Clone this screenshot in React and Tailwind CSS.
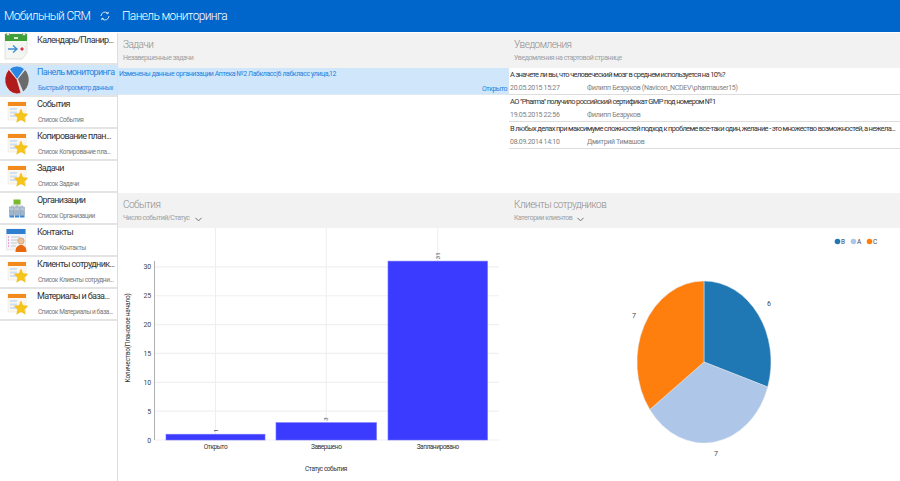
import React from 'react';
import {ChevronDown} from 'lucide-react';

function CalendarIcon() {
  return (
    <svg width="26" height="29" viewBox="0 0 26 29" className="-mt-1">
      <path d="M1 2h22v19l-5 6H1z" fill="#f4f6f2" stroke="#cfd4cc" strokeWidth="0.6" />
      <rect x="1" y="2" width="22" height="7" fill="#3fa03a" />
      <circle cx="4" cy="2" r="1.6" fill="#e8efe4" stroke="#6a8f60" strokeWidth="0.5" />
      <circle cx="20" cy="2" r="1.6" fill="#e8efe4" stroke="#6a8f60" strokeWidth="0.5" />
      <rect x="10" y="5" width="4" height="2" fill="#d9ecd5" />
      <path d="M4 17h8M9 13.500l4 3.500-4 3.500" fill="none" stroke="#3f8fd6" strokeWidth="1.400" />
      <rect x="15" y="14" width="6" height="6" fill="#fff" stroke="#d8d8d8" strokeWidth="0.4" />
      <circle cx="18" cy="17" r="1.700" fill="#d8344a" />
    </svg>
  );
}

function PieIcon() {
  return (
    <svg width="24" height="28" viewBox="0 0 24 28">
      <path d="M12 13.500L4.500 3A12 13.500 0 0 1 19.500 3z" fill="#2a86e0" stroke="#fff" strokeWidth="0.6" />
      <path d="M12 13.500L3.800 3.500A12 14 0 0 0 16 27z" fill="#b01c1c" stroke="#fff" strokeWidth="0.6" />
      <path d="M12.500 13L20.200 3.500A12 14 0 0 1 18 26z" fill="#6b6b6b" stroke="#fff" strokeWidth="0.6" />
    </svg>
  );
}

function StarTableIcon() {
  return (
    <svg width="21" height="23" viewBox="0 0 21 23">
      <rect x="1" y="1" width="18" height="18" fill="#fbf7ee" stroke="#e6e1d6" strokeWidth="0.5" />
      <rect x="1" y="1" width="18" height="4" fill="#f28a1e" />
      <rect x="3" y="7" width="7" height="2" fill="#cfe0f2" />
      <rect x="3" y="10.500" width="7" height="2" fill="#cfe0f2" />
      <rect x="3" y="14" width="7" height="2" fill="#cfe0f2" />
      <path d="M14 8l2 4.500 4.800.6-3.500 3.300 1 4.800L14 18.700 9.700 21.200l1-4.800L7.200 13.100l4.800-.6z" fill="#f5c518" stroke="#e8ae10" strokeWidth="0.4" />
    </svg>
  );
}

function OrgIcon() {
  return (
    <svg width="16" height="19" viewBox="0 0 16 19">
      <rect x="4.500" y="0.500" width="7" height="5" fill="#79b92e" />
      <path d="M8 5.500v2M2.500 8V7h11v1M8 7v1" fill="none" stroke="#8a9aa8" strokeWidth="0.6" />
      {[0.5, 5.8, 11].map((x) => (
        <g key={x}>
          <rect x={x} y="8" width="4.500" height="4" fill="#b6c6d6" stroke="#71879c" strokeWidth="0.4" />
          <rect x={x} y="12.500" width="4.500" height="4" fill="#9db6ce" stroke="#71879c" strokeWidth="0.4" />
          <rect x={x} y="16.500" width="4.500" height="2" fill="#3f86cf" />
        </g>
      ))}
    </svg>
  );
}

function ContactIcon() {
  return (
    <svg width="22" height="25" viewBox="0 0 22 25">
      <rect x="0.500" y="1" width="19" height="21" fill="#f4f5f7" stroke="#d6d8dc" strokeWidth="0.5" />
      <rect x="0.500" y="1" width="19" height="5" fill="#2f7fd0" />
      <path d="M2 9h1M2 12h1M2 15h1M2 18h1" stroke="#d64fc8" strokeWidth="1" />
      <path d="M5 9h9M5 12h7M5 15h6M5 18h5" stroke="#b9bec6" strokeWidth="0.8" />
      <circle cx="15" cy="13" r="3.200" fill="#eec39a" stroke="#a87f58" strokeWidth="0.4" />
      <path d="M9.500 24c0-5 2.500-7 5.500-7s5.500 2 5.500 7z" fill="#e8690f" />
    </svg>
  );
}

const menu = [
  {title: 'Календарь/Планир...', sub: '', icon: <CalendarIcon />},
  {title: 'Панель мониторинга', sub: 'Быстрый просмотр данных', icon: <PieIcon />, active: true},
  {title: 'События', sub: 'Список События', icon: <StarTableIcon />},
  {title: 'Копирование план...', sub: 'Список Копирование пла...', icon: <StarTableIcon />},
  {title: 'Задачи', sub: 'Список Задачи', icon: <StarTableIcon />},
  {title: 'Организации', sub: 'Список Организации', icon: <OrgIcon />},
  {title: 'Контакты', sub: 'Список Контакты', icon: <ContactIcon />},
  {title: 'Клиенты сотрудник...', sub: 'Список Клиенты сотрудни...', icon: <StarTableIcon />},
  {title: 'Материалы и база...', sub: 'Список Материалы и база...', icon: <StarTableIcon />},
];

const notices = [
  {
    text: 'А значете ли вы, что человеческий мозг в среднем используется на 10%?',
    date: '20.05.2015 15:27',
    author: 'Филипп Безруков (Navicon_NCDEV\\pharmauser15)',
  },
  {
    text: 'АО "Pharma" получило российский сертификат GMP под номером №1',
    date: '19.05.2015 22:56',
    author: 'Филипп Безруков',
  },
  {
    text: 'В любых делах при максимуме сложностей подход к проблеме все-таки один, желание - это множество возможностей, а нежела...',
    date: '08.09.2014 14:10',
    author: 'Дмитрий Тимашов',
  },
];

function PanelHead({title, sub, chevron}) {
  return (
    <div className="h-[35px] bg-[#f2f2f2] px-[5px] pt-[5px]">
      <div className="text-[10px] leading-[14px] font-light text-[#8c8c8c] tracking-[-0.5px]">{title}</div>
      <div className="flex items-center gap-[3px] text-[7px] leading-[13px] text-[#a0a0a0] tracking-[-0.45px]">
        {sub}
        {chevron && <ChevronDown size={11} strokeWidth={2} className="text-[#666] mt-[2px]" />}
      </div>
    </div>
  );
}

function BarChart() {
  const bars = [
    {x: 166, w: 99, v: 1, label: 'Открыто'},
    {x: 276, w: 100.500, v: 3, label: 'Завершено'},
    {x: 388, w: 99.500, v: 31, label: 'Запланировано'},
  ];
  const y = (v) => 440 - v * 5.77;
  return (
    <svg width="391" height="253" viewBox="118 228 391 253" className="block" fontFamily="Roboto, sans-serif">
      {[0, 5, 10, 15, 20, 25, 30].map((v) => (
        <g key={v}>
          <line x1="154" x2="499" y1={y(v)} y2={y(v)} stroke="#f0f0f0" strokeWidth="1.200" />
          <text x="151" y={y(v) + 2.500} textAnchor="end" fontSize="7" fill="#444" letterSpacing="-0.2">{v}</text>
        </g>
      ))}
      {bars.map((b) => (
        <line key={b.x} x1={b.x + b.w / 2} x2={b.x + b.w / 2} y1="228" y2="440" stroke="#eeeeee" />
      ))}
      <line x1="154.500" x2="154.500" y1="261" y2="440" stroke="#b0b0b0" />
      {bars.map((b) => (
        <g key={b.label}>
          <rect x={b.x} y={y(b.v)} width={b.w} height={440 - y(b.v)} fill="#3b3bff" stroke="#6f6fff" strokeWidth="0.6" />
          <text transform={`translate(${b.x + b.w / 2 + 2} ${y(b.v) - 2}) rotate(-90)`} fontSize="6" fill="#555">{b.v}</text>
          <text x={b.x + b.w / 2} y="449" textAnchor="middle" fontSize="6.500" fill="#333" letterSpacing="-0.45">{b.label}</text>
        </g>
      ))}
      <text x="326" y="471" textAnchor="middle" fontSize="6.500" fill="#333" letterSpacing="-0.45">Статус события</text>
      <text transform="translate(129.500 338) rotate(-90)" textAnchor="middle" fontSize="6.500" fill="#333" letterSpacing="-0.2">Количество(Плановое начало)</text>
    </svg>
  );
}

function PieChart() {
  return (
    <svg width="391" height="253" viewBox="509 228 391 253" className="block" fontFamily="Roboto, sans-serif">
      <circle cx="837.500" cy="241.500" r="2.800" fill="#1f77b4" />
      <text x="841" y="244" fontSize="6.500" fill="#444">B</text>
      <circle cx="853.500" cy="241.500" r="2.800" fill="#aec7e8" />
      <text x="857" y="244" fontSize="6.500" fill="#444">A</text>
      <circle cx="869.500" cy="241.500" r="2.800" fill="#ff7f0e" />
      <text x="873" y="244" fontSize="6.500" fill="#444">C</text>
      <path d="M704 362V281A67 81 0 0 1 767.700 387z" fill="#1f77b4" stroke="#dfe6ee" strokeWidth="0.5" />
      <path d="M704 362L767.700 387A67 81 0 0 1 649.800 409.600z" fill="#aec7e8" stroke="#dfe6ee" strokeWidth="0.5" />
      <path d="M704 362L649.800 409.600A67 81 0 0 1 704 281z" fill="#ff7f0e" stroke="#dfe6ee" strokeWidth="0.5" />
      <text x="767" y="306" fontSize="7" fill="#444">6</text>
      <text x="714" y="456" fontSize="7" fill="#444">7</text>
      <text x="632" y="318" fontSize="7" fill="#444">7</text>
    </svg>
  );
}

export default function App() {
  return (
    <div className="h-[481px] w-[900px] overflow-hidden bg-white font-['Roboto','Liberation_Sans',sans-serif]">
      <header className="flex h-8 items-center bg-[#0066cc] pl-[4px] text-white">
        <span className="w-[96px] whitespace-nowrap text-[12px] font-light tracking-[-0.65px]">Мобильный CRM</span>
        <svg width="10" height="10" viewBox="0 0 10 10" fill="none" stroke="#fff" strokeWidth="0.8">
          <path d="M1 5a4 4 0 0 1 6.800-2.800M9 5a4 4 0 0 1-6.800 2.800" />
          <path d="M8.200 0.800v1.800h-1.800M1.800 9.200v-1.800h1.800" />
        </svg>
        <span className="ml-[12px] whitespace-nowrap text-[12px] font-light tracking-[-0.65px]">Панель мониторинга</span>
      </header>
      <div className="flex h-[449px] pt-px">
        <aside className="h-full w-[118px] shrink-0 border-r border-[#dedede]">
          {menu.map((m) => (
            <div
              key={m.title}
              className={`flex h-8 overflow-hidden border-b-2 border-[#e4e4e4] ${m.active ? 'bg-[#cfe6fb]' : 'bg-white'}`}
            >
              <div className="flex w-[34px] shrink-0 items-center justify-center">{m.icon}</div>
              <div className="min-w-0 pl-[3px]">
                <div className={`whitespace-nowrap text-[9px] leading-[15px] tracking-[-0.65px] ${m.active ? 'text-[#2a84de]' : 'text-[#333]'}`}>{m.title}</div>
                <div className={`mt-[1px] whitespace-nowrap pl-px text-[6.500px] leading-[14px] tracking-[-0.4px] ${m.active ? 'text-[#2a84de]' : 'text-[#777]'}`}>{m.sub}</div>
              </div>
            </div>
          ))}
        </aside>
        <main className="flex min-w-0 flex-1 flex-col">
          <div className="grid h-[160px] grid-cols-[391px_1fr]">
            <section>
              <PanelHead title="Задачи" sub="Незавершенные задачи" />
              <div className="flex h-[27px] flex-col border-b border-[#dfe9f2] bg-[#d0e7fb] pr-[2px] text-[#1e7fdc]">
                <div className="whitespace-nowrap pl-px text-[7px] leading-[13px] tracking-[-0.42px]">Изменены данные организации Аптека №2 Лабкласс|6 лабкласс улица,12</div>
                <div className="mt-auto text-right text-[7px] leading-[10px] tracking-[-0.5px]">Открыто</div>
              </div>
            </section>
            <section>
              <PanelHead title="Уведомления" sub="Уведомления на стартовой странице" />
              {notices.map((n) => (
                <div key={n.date} className="h-[27px] border-b border-[#dddddd] pl-px">
                  <div className="whitespace-nowrap text-[7.500px] leading-[14px] tracking-[-0.65px] text-[#333]">{n.text}</div>
                  <div className="flex text-[7px] leading-[13px] tracking-[-0.3px] text-[#808080]">
                    <span className="w-[77px]">{n.date}</span>
                    <span>{n.author}</span>
                  </div>
                </div>
              ))}
            </section>
          </div>
          <div className="grid flex-1 grid-cols-[391px_1fr]">
            <section>
              <PanelHead title="События" sub="Число событий/Статус" chevron />
              <BarChart />
            </section>
            <section>
              <PanelHead title="Клиенты сотрудников" sub="Категории клиентов" chevron />
              <PieChart />
            </section>
          </div>
        </main>
      </div>
    </div>
  );
}
